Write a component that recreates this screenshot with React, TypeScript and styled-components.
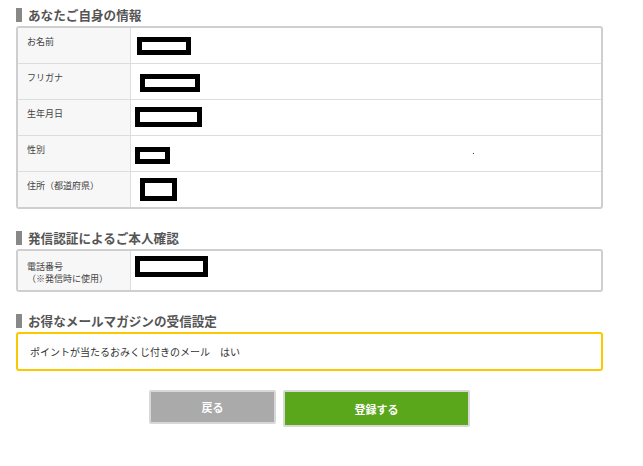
import * as React from "react"
import styled, { createGlobalStyle } from "styled-components"

const GlobalStyle = createGlobalStyle`
  html, body {
    margin: 0;
    padding: 0;
    background: #fff;
  }
  body {
    font-family: "Noto Sans CJK JP", "Noto Sans", sans-serif;
    color: #333;
  }
`

const Page = styled.div`
  width: 587px;
  padding: 6px 40px 0 16px;
`

const Section = styled.section`
  & + & {
    margin-top: 20px;
  }
`

const Heading = styled.h2`
  display: flex;
  align-items: center;
  gap: 6px;
  height: 18px;
  margin: 0 0 2px;
  font-size: 12.6px;
  line-height: 18px;
  font-weight: bold;
  color: #555;

  &::before {
    content: "";
    width: 6px;
    height: 14px;
    background: #888;
  }
`

const Table = styled.div`
  border: 2px solid #cfcfcf;
  border-radius: 3px;
  overflow: hidden;
`

const Row = styled.div<{ $height: number }>`
  display: grid;
  grid-template-columns: 113px 1fr;
  height: ${(p) => p.$height}px;

  & + & {
    border-top: 1px solid #ddd;
  }
`

const Label = styled.div<{ $top: number }>`
  background: #f7f7f7;
  border-right: 1px solid #ddd;
  padding: ${(p) => p.$top}px 0 0 9px;
  font-size: 9px;
  line-height: 12px;
  color: #444;
`

const Value = styled.div`
  display: flex;
  align-items: flex-start;
`

const Redacted = styled.span<{ $w: number; $h: number; $x: number; $y: number }>`
  box-sizing: border-box;
  width: ${(p) => p.$w}px;
  height: ${(p) => p.$h}px;
  margin: ${(p) => p.$y}px 0 0 ${(p) => p.$x}px;
  border: 5px solid #000;
  background: #fff;
`

const Speck = styled.span`
  width: 1px;
  height: 1px;
  margin: 17px 0 0 303px;
  background: #333;
`

const Notice = styled.div`
  height: 35px;
  border: 2px solid #fcc800;
  border-radius: 3px;
  padding: 0 12px;
  display: flex;
  align-items: center;
  font-size: 10px;
  color: #333;
`

const Actions = styled.div`
  display: flex;
  justify-content: center;
  align-items: flex-start;
  gap: 7px;
  margin-top: 19px;
`

const Button = styled.button<{ $primary?: boolean }>`
  box-sizing: border-box;
  width: ${(p) => (p.$primary ? 187 : 127)}px;
  height: ${(p) => (p.$primary ? 37 : 34)}px;
  border: 2px solid #d8d8d8;
  border-radius: 2px;
  background: ${(p) => (p.$primary ? "#5aa71c" : "#aaaaaa")};
  color: #fff;
  font-family: inherit;
  font-size: 11px;
  font-weight: bold;
  cursor: pointer;
`

type Entry = {
  label: React.ReactNode
  box: { w: number; h: number; x: number; y: number }
  speck?: boolean
}

const personal: Entry[] = [
  { label: "お名前", box: { w: 54, h: 18, x: 6, y: 9 } },
  { label: "フリガナ", box: { w: 60, h: 18, x: 9, y: 10 } },
  { label: "生年月日", box: { w: 67, h: 20, x: 4, y: 7 } },
  { label: "性別", box: { w: 35, h: 17, x: 4, y: 11 }, speck: true },
  { label: "住所（都道府県）", box: { w: 37, h: 23, x: 9, y: 6 } },
]

const App: React.FC = () => (
  <>
    <GlobalStyle />
    <Page>
      <Section>
        <Heading>あなたご自身の情報</Heading>
        <Table>
          {personal.map((e, i) => (
            <Row key={i} $height={35}>
              <Label $top={8}>{e.label}</Label>
              <Value>
                <Redacted $w={e.box.w} $h={e.box.h} $x={e.box.x} $y={e.box.y} />
                {e.speck && <Speck />}
              </Value>
            </Row>
          ))}
        </Table>
      </Section>

      <Section>
        <Heading>発信認証によるご本人確認</Heading>
        <Table>
          <Row $height={39}>
            <Label $top={10}>
              電話番号
              <br />
              （※発信時に使用）
            </Label>
            <Value>
              <Redacted $w={73} $h={21} $x={4} $y={5} />
            </Value>
          </Row>
        </Table>
      </Section>

      <Section>
        <Heading>お得なメールマガジンの受信設定</Heading>
        <Notice>ポイントが当たるおみくじ付きのメール　はい</Notice>
      </Section>

      <Actions>
        <Button type="button">戻る</Button>
        <Button type="button" $primary>
          登録する
        </Button>
      </Actions>
    </Page>
  </>
)

export default App
